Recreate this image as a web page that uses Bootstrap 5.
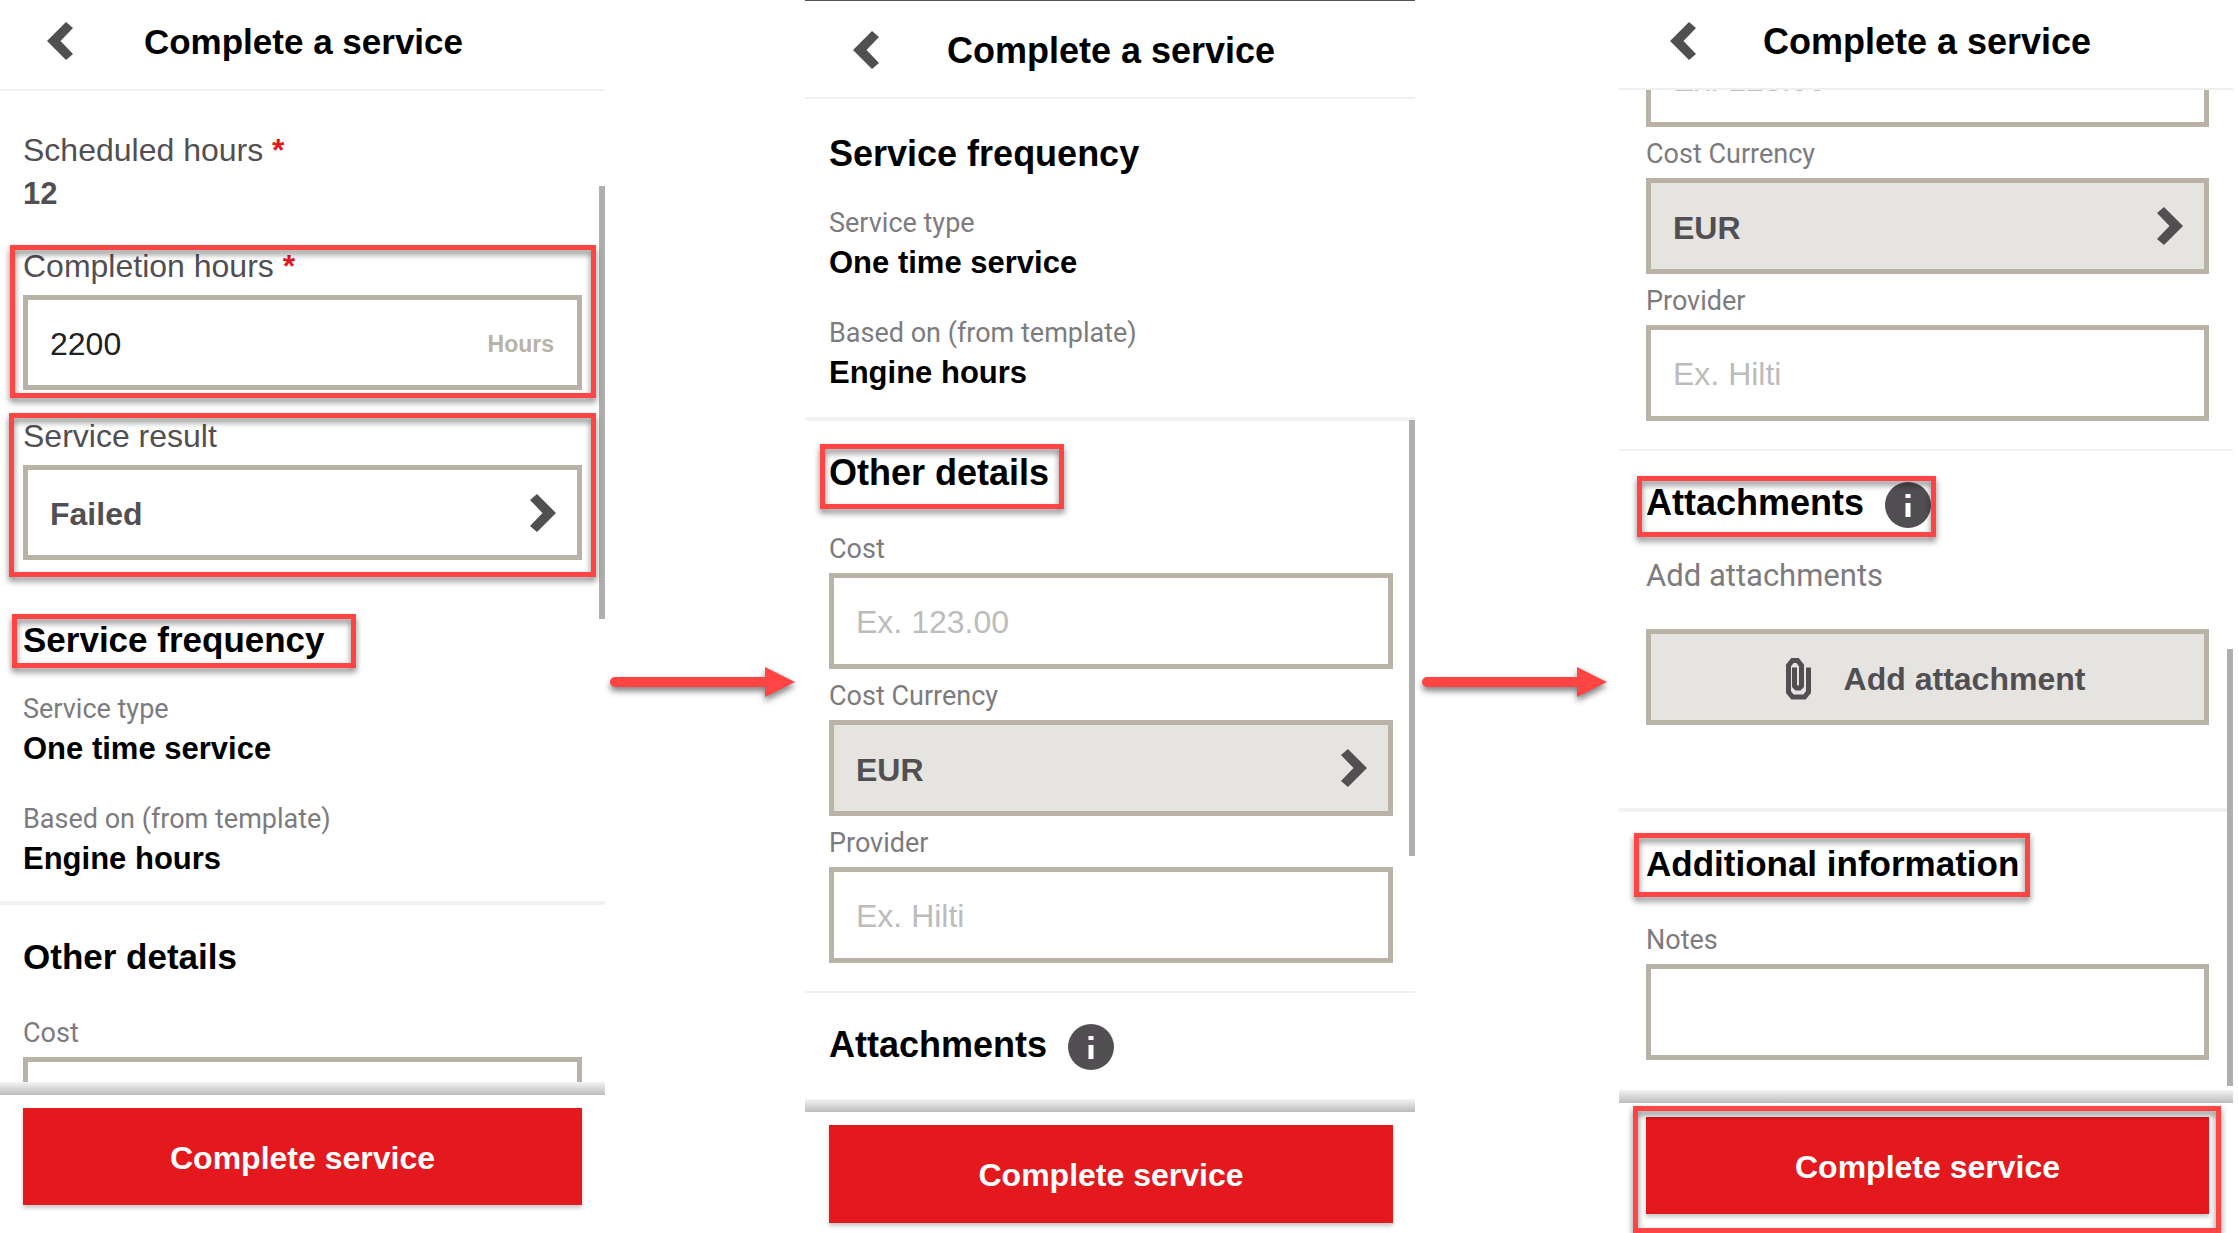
<!DOCTYPE html>
<html lang="en">
<head>
<meta charset="utf-8">
<meta name="viewport" content="width=device-width, initial-scale=1">
<title>Complete a service</title>
<link href="https://cdn.jsdelivr.net/npm/bootstrap@5.3.0/dist/css/bootstrap.min.css" rel="stylesheet">
<style>
  :root { --ink: #524f53; --muted: #7d7b7e; --line: #b8b2a7; --callout: #ff4444; }
  body { font-family: "Liberation Sans", Arial, sans-serif; font-size: 32px; line-height: 40px; color: #000; background: #fff; }

  /* Phone screens */
  .screen { --start: 24px; --end: 22px; --field: 96px; --heading: 36px; flex: 610 1 0; min-width: 0; }
  .screen-one { --start: 23px; --end: 23px; --field: 95px; --heading: 35px; flex-grow: 605; }
  .screen-three { --start: 27px; --end: 24px; flex-grow: 614; }
  .page-end { padding-right: 5px; }

  .topbar { padding-top: 20px; padding-bottom: 25px; border-bottom: 2px solid #efefef; }
  .screen-two .topbar { padding-top: 28px; padding-bottom: 24px; border-top: 1px solid #555; }
  .screen-three .topbar { padding-bottom: 24px; }
  .back { flex: 0 0 100px; padding: 0 0 2px calc(var(--start) + 24px); border: 0; background: none; text-align: left; line-height: 0; }
  .topbar h1 { margin: 0; padding-right: 98px; font-size: 36px; line-height: 44px; font-weight: 700; }
  .screen-one .topbar h1 { font-size: 35px; }

  .viewport { flex: 1 1 0; min-height: 0; overflow: hidden; }
  .block { padding-left: var(--start); padding-right: var(--end); }
  .first-one { padding-top: 39px; }
  .first-two { padding-top: 33px; }
  .scrolled { display: flow-root; margin-top: -63px; }
  .divider { height: 2px; margin: 28px 0 30px; background: #f2f1f1; }
  .divider.thick { height: 4px; margin-top: 24px; background: #f3f2f0; }
  .screen-one .divider.thick { margin-top: 22px; }
  .divider.thick.spaced { margin-top: 83px; }

  .heading { margin: 0; font-size: var(--heading); line-height: 44px; font-weight: 700; width: fit-content; }
  .heading-long { font-size: 35px; }
  .strong-label { display: block; color: var(--ink); }
  .soft-label { display: block; font-family: Roboto, sans-serif; font-size: 27px; color: var(--muted); }
  .star { color: #e3191e; font-weight: 700; }
  .value { font-size: 31px; font-weight: 700; }
  .dim { color: var(--ink); margin-top: 4px; }
  .pair { margin: 27px 0 0; }
  .pair + .pair { margin-top: 30px; }
  .pair dt { font-weight: 400; }
  .pair dd { margin: 0; }
  .group-one { margin-top: 32px; }
  .group-two { margin-top: 26px; }
  .after-field { margin-top: 58px; }
  .after-heading { margin-top: 34px; }
  .next-field { margin-top: 7px; }
  .hint { margin: 31px 0 33px; font-family: Roboto, sans-serif; font-size: 31px; color: var(--muted); }

  .box { position: relative; margin-top: 4px; }
  .box.roomy { margin-top: 9px; }
  .box .form-control, .box .form-select, .attach {
    display: block; width: 100%; height: var(--field); padding: 3px 22px 0; border: 5px solid var(--line); border-radius: 0;
    background: #fff; color: #212121; font-size: 32px; line-height: 40px; resize: none; overflow: hidden;
  }
  .box .form-select { color: var(--ink); font-weight: 700; }
  .box .form-control::placeholder { color: #bcbcbc; opacity: 1; }
  .box .filled, .attach { background: #e5e4e0; }
  .box svg { position: absolute; right: 26px; top: 50%; margin-top: -19px; pointer-events: none; }
  .unit { position: absolute; right: 28px; top: 50%; margin-top: -19px; font-size: 23px; font-weight: 700; color: var(--line); }
  .attach { display: flex; align-items: center; justify-content: center; color: var(--ink); font-weight: 700; }
  .attach svg { margin-left: 16px; margin-right: 33px; }
  .info { margin: 1px 0 -3px 21px; }

  .fade-edge { height: 13px; background: linear-gradient(#f4f4f4, #bcbcbc); }
  .foot { padding: 13px var(--end) 10px var(--start); }
  .screen-one .foot { padding-bottom: 28px; }
  .screen-three .foot { padding-top: 14px; padding-bottom: 19px; }
  .submit { display: block; width: 100%; height: 97px; padding: 2px 0 0; border: 0; border-radius: 0; background: #e3191e; color: #fff; font-size: 32px; line-height: 40px; font-weight: 700; box-shadow: 0 3px 4px rgba(0,0,0,.22); }
  .screen-two .submit { height: 98px; }
  .thumb { position: absolute; right: 0; width: 6px; background: #b0afb0; }
  .thumb-one { top: 186px; height: 433px; }
  .thumb-two { top: 420px; height: 436px; }
  .thumb-three { top: 649px; height: 437px; }

  /* Red callout frames laid over the screens */
  .callout { position: relative; }
  .callout::after { content: ""; position: absolute; z-index: 2; border: 5px solid var(--callout); filter: drop-shadow(0 4px 3px rgba(0,0,0,.5)); pointer-events: none; }
  .c-hours::after { inset: -1px -14px -8px -13px; }
  .c-result::after { inset: -3px -14px -17px -14px; }
  .c-frequency::after { inset: -4px -31px -6px -11px; }
  .c-details::after { inset: -7px -15px -14px -9px; }
  .c-attach::after { inset: -5px -5px -12px -9px; }
  .c-extra::after { inset: -9px -11px -11px -12px; }
  .c-submit::after { inset: -11px -12px -19px -13px; }

  /* Arrows between the screens */
  .step { flex: 0 0 200px; padding: 667px 10px 0 5px; line-height: 0; }
  .step-late { flex-basis: 204px; padding-left: 7px; padding-right: 12px; }
  .step svg { width: 100%; height: 30px; overflow: visible; filter: drop-shadow(0 4px 3px rgba(0,0,0,.5)); }
</style>
<script src="https://cdn.jsdelivr.net/npm/bootstrap@5.3.0/dist/js/bootstrap.bundle.min.js"></script>
</head>
<body>
<svg class="d-none" aria-hidden="true">
  <symbol id="chev-left" viewBox="0 0 26 38"><path d="M0 19 19 0l7 6-12.500 13L26 32l-7 6z" fill="#524f53"/></symbol>
  <symbol id="chev-right" viewBox="0 0 26 38"><path d="M26 19 7 0 0 6l12.500 13L0 32l7 6z" fill="#524f53"/></symbol>
  <symbol id="info" viewBox="0 0 46 46"><circle cx="23" cy="23" r="23" fill="#524f53"/><path d="M20.500 12h5v4h-5zM20.500 21h5v14h-5z" fill="#fff"/></symbol>
  <symbol id="arrow" viewBox="0 0 185 30"><path d="M5 10h150V0l30 15-30 15V20H5a5 5 0 0 1 0-10z" fill="#ff4444"/></symbol>
</svg>

<main class="page-end d-flex vh-100 overflow-hidden">

  <section class="screen screen-one position-relative d-flex flex-column">
    <header class="topbar d-flex align-items-center">
      <button class="back" type="button" aria-label="Back"><svg width="26" height="38"><use href="#chev-left"/></svg></button>
      <h1 class="flex-fill text-center text-nowrap">Complete a service</h1>
    </header>
    <div class="viewport">
      <div class="block first-one">
        <div class="strong-label">Scheduled hours <span class="star">*</span></div>
        <div class="value dim">12</div>
        <div class="group-one callout c-hours">
          <label class="strong-label" for="hours">Completion hours <span class="star">*</span></label>
          <div class="box roomy"><input class="form-control" id="hours" type="text" value="2200"><span class="unit">Hours</span></div>
        </div>
        <div class="group-two callout c-result">
          <label class="strong-label" for="result">Service result</label>
          <div class="box roomy"><select class="form-select" id="result"><option>Failed</option></select><svg width="26" height="38"><use href="#chev-right"/></svg></div>
        </div>
        <h2 class="heading after-field callout c-frequency">Service frequency</h2>
        <dl class="pair"><dt class="soft-label">Service type</dt><dd class="value">One time service</dd></dl>
        <dl class="pair"><dt class="soft-label">Based on (from template)</dt><dd class="value">Engine hours</dd></dl>
      </div>
      <div class="divider thick"></div>
      <div class="block">
        <h2 class="heading">Other details</h2>
        <label class="soft-label after-heading" for="cost1">Cost</label>
        <div class="box"><input class="form-control" id="cost1" type="text"></div>
      </div>
    </div>
    <div class="fade-edge"></div>
    <div class="foot"><button class="submit" type="button">Complete service</button></div>
    <div class="thumb thumb-one"></div>
  </section>

  <div class="step"><svg viewBox="0 0 185 30"><use href="#arrow"/></svg></div>

  <section class="screen screen-two position-relative d-flex flex-column">
    <header class="topbar d-flex align-items-center">
      <button class="back" type="button" aria-label="Back"><svg width="26" height="38"><use href="#chev-left"/></svg></button>
      <h1 class="flex-fill text-center text-nowrap">Complete a service</h1>
    </header>
    <div class="viewport">
      <div class="block first-two">
        <h2 class="heading">Service frequency</h2>
        <dl class="pair"><dt class="soft-label">Service type</dt><dd class="value">One time service</dd></dl>
        <dl class="pair"><dt class="soft-label">Based on (from template)</dt><dd class="value">Engine hours</dd></dl>
      </div>
      <div class="divider thick"></div>
      <div class="block">
        <h2 class="heading callout c-details">Other details</h2>
        <label class="soft-label after-heading" for="cost2">Cost</label>
        <div class="box"><input class="form-control" id="cost2" type="text" placeholder="Ex. 123.00"></div>
        <label class="soft-label next-field" for="currency2">Cost Currency</label>
        <div class="box"><select class="form-select filled" id="currency2"><option>EUR</option></select><svg width="26" height="38"><use href="#chev-right"/></svg></div>
        <label class="soft-label next-field" for="provider2">Provider</label>
        <div class="box"><input class="form-control" id="provider2" type="text" placeholder="Ex. Hilti"></div>
      </div>
      <div class="divider"></div>
      <div class="block">
        <h2 class="heading d-flex align-items-center">Attachments<svg class="info" width="46" height="46"><use href="#info"/></svg></h2>
      </div>
    </div>
    <div class="fade-edge"></div>
    <div class="foot"><button class="submit" type="button">Complete service</button></div>
    <div class="thumb thumb-two"></div>
  </section>

  <div class="step step-late"><svg viewBox="0 0 185 30"><use href="#arrow"/></svg></div>

  <section class="screen screen-three position-relative d-flex flex-column">
    <header class="topbar d-flex align-items-center">
      <button class="back" type="button" aria-label="Back"><svg width="26" height="38"><use href="#chev-left"/></svg></button>
      <h1 class="flex-fill text-center text-nowrap">Complete a service</h1>
    </header>
    <div class="viewport">
      <div class="block scrolled">
        <div class="box mt-1"><input class="form-control" type="text" aria-label="Cost" placeholder="Ex. 123.00"></div>
        <label class="soft-label next-field" for="currency3">Cost Currency</label>
        <div class="box"><select class="form-select filled" id="currency3"><option>EUR</option></select><svg width="26" height="38"><use href="#chev-right"/></svg></div>
        <label class="soft-label next-field" for="provider3">Provider</label>
        <div class="box"><input class="form-control" id="provider3" type="text" placeholder="Ex. Hilti"></div>
      </div>
      <div class="divider"></div>
      <div class="block">
        <h2 class="heading d-flex align-items-center callout c-attach">Attachments<svg class="info" width="46" height="46"><use href="#info"/></svg></h2>
        <p class="hint">Add attachments</p>
        <button class="attach" type="button">
          <svg width="25" height="42" viewBox="0 0 25 42" fill="none" stroke="#524f53" stroke-width="5"><path d="M22.500 9.500V34l-4 5H6.500l-4-5V7.500l4-5h5l4 5V28l-2 2h-3l-2-2V9.500"/></svg>
          Add attachment
        </button>
      </div>
      <div class="divider thick spaced"></div>
      <div class="block">
        <h2 class="heading heading-long callout c-extra">Additional information</h2>
        <label class="soft-label after-heading" for="notes">Notes</label>
        <div class="box"><textarea class="form-control" id="notes"></textarea></div>
      </div>
    </div>
    <div class="fade-edge"></div>
    <div class="foot"><div class="callout c-submit"><button class="submit" type="button">Complete service</button></div></div>
    <div class="thumb thumb-three"></div>
  </section>

</main>
</body>
</html>
